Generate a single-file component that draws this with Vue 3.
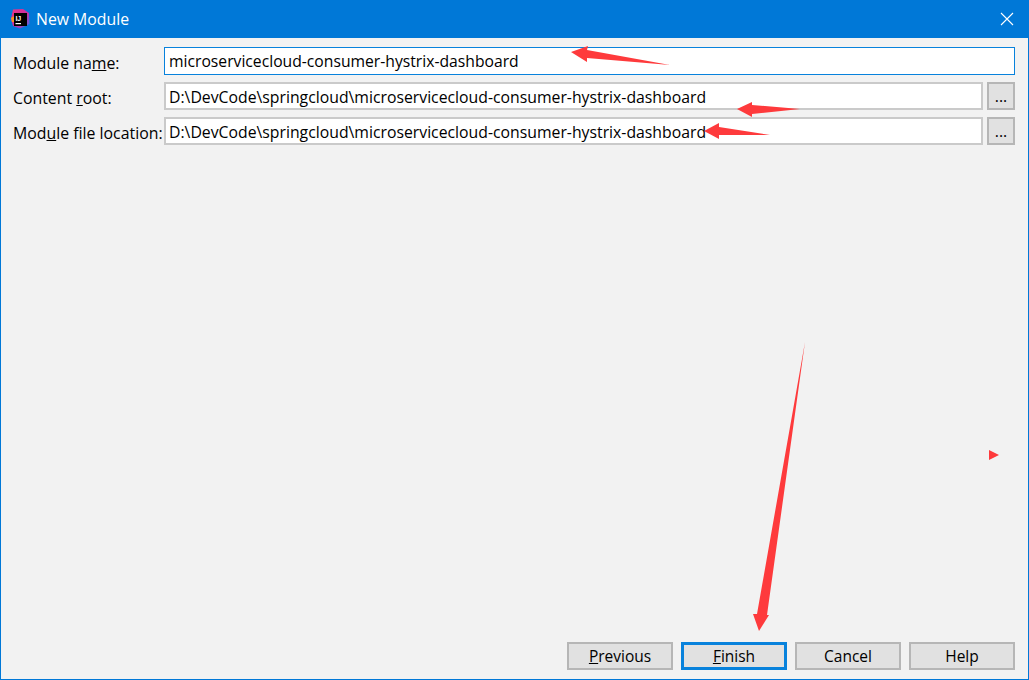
<template>
  <div class="window">
    <header class="titlebar">
      <svg class="logo" viewBox="0 0 20 20" width="20" height="20">
        <defs>
          <linearGradient id="lg" x1="0" y1="0" x2="1" y2="1">
            <stop offset="0" stop-color="#f0337f" />
            <stop offset="0.55" stop-color="#c82fa6" />
            <stop offset="1" stop-color="#3f6fe6" />
          </linearGradient>
        </defs>
        <polygon points="3,0.5 13,0 19,4 19.5,15 10,19.5 3,17 1,10" fill="url(#lg)" />
        <polygon points="1,9 4,7 4,13 2,13" fill="#f7901e" />
        <rect x="4" y="4" width="13" height="13" fill="#000" />
        <rect x="5.5" y="14" width="5.5" height="1.2" fill="#fff" />
        <text x="5.4" y="12" class="ij">IJ</text>
      </svg>
      <span class="title">New Module</span>
      <svg class="close" viewBox="0 0 14 14" width="14" height="14">
        <path d="M1 1 L13 13 M13 1 L1 13" stroke="#fff" stroke-width="1.1" fill="none" />
      </svg>
    </header>
    <main class="body">
      <section class="form">
        <label class="lbl">Module na<u>m</u>e:</label>
        <div class="input focus wide">microservicecloud-consumer-hystrix-dashboard</div>
        <label class="lbl">Content <u>r</u>oot:</label>
        <div class="input">D:\DevCode\springcloud\microservicecloud-consumer-hystrix-dashboard</div>
        <button class="dots">...</button>
        <label class="lbl">Mod<u>u</u>le file location:</label>
        <div class="input">D:\DevCode\springcloud\microservicecloud-consumer-hystrix-dashboard</div>
        <button class="dots">...</button>
      </section>
      <footer class="actions">
        <button class="btn"><u>P</u>revious</button>
        <button class="btn primary"><u>F</u>inish</button>
        <button class="btn">Cancel</button>
        <button class="btn">Help</button>
      </footer>
    </main>
    <svg class="marks" viewBox="0 0 1029 680" width="1029" height="680">
      <polygon v-for="(p, i) in arrows" :key="i" :points="p" fill="#fe3a3c" />
    </svg>
  </div>
</template>

<script setup>
const arrows = [
  '571,52 588,46 587,50 670,65 587,58 587,62',
  '737,109 752,102 752,105 800,109 752,114 752,117',
  '704,131 719,123 719,127 770,135 719,135 719,139',
  '805,342 767,615 769,615 759,631 753,614 757,614',
  '989,450 999,455 989,460',
]
</script>

<style>
html, body { margin: 0; padding: 0; }
</style>

<style scoped>
.window {
  position: relative;
  box-sizing: border-box;
  width: 1029px;
  height: 680px;
  display: flex;
  flex-direction: column;
  background: #f2f2f2;
  border: 1px solid #0078d7;
  border-top: 0;
  font-family: "Open Sans", "Noto Sans", sans-serif;
  color: #000;
  overflow: hidden;
}
.titlebar {
  flex: none;
  height: 38px;
  margin: 0 -1px;
  padding: 0 15px 0 10px;
  display: flex;
  align-items: center;
  background: #0078d7;
  color: #fff;
}
.logo { flex: none; }
.ij { font: 700 7px "Liberation Sans", sans-serif; fill: #fff; }
.title { margin-left: 6px; font-size: 15.8px; flex: 1; }
.close { flex: none; }
.body {
  flex: 1;
  display: flex;
  flex-direction: column;
  justify-content: space-between;
  padding: 9px 13px 9px 12px;
  min-height: 0;
}
.form {
  display: grid;
  grid-template-columns: 151px 1fr 28px;
  grid-auto-rows: 28px;
  row-gap: 7px;
}
.lbl { font-size: 15.85px; line-height: 28px; padding-top: 2px; white-space: nowrap; height: 28px; box-sizing: border-box; }
.input {
  box-sizing: border-box;
  height: 28px;
  margin-right: 4px;
  padding: 1px 3px 0;
  background: #fff;
  border: 2px solid #cacaca;
  font-size: 15.79px;
  line-height: 25px;
  white-space: nowrap;
  overflow: hidden;
}
.input.wide { grid-column: 2 / 4; margin-right: 0; }
.input.focus { border-color: #0882dc; border-width: 1px; padding: 1px 4px 0; font-size: 15.7px; }
.dots {
  box-sizing: border-box;
  height: 28px;
  padding: 0;
  background: #e1e1e1;
  border: 2px solid #b6b6b6;
  font: inherit;
  font-size: 15.7px;
  color: #000;
}
.actions {
  display: flex;
  justify-content: flex-end;
  gap: 8px;
}
.btn {
  box-sizing: border-box;
  width: 106px;
  height: 28px;
  padding: 0;
  background: #e1e1e1;
  border: 2px solid #b6b6b6;
  font: inherit;
  font-size: 15.5px;
  line-height: 22px;
  color: #000;
}
.btn.primary { border: 3px solid #0882dc; }
.marks { position: absolute; left: -1px; top: 0; pointer-events: none; }
</style>
